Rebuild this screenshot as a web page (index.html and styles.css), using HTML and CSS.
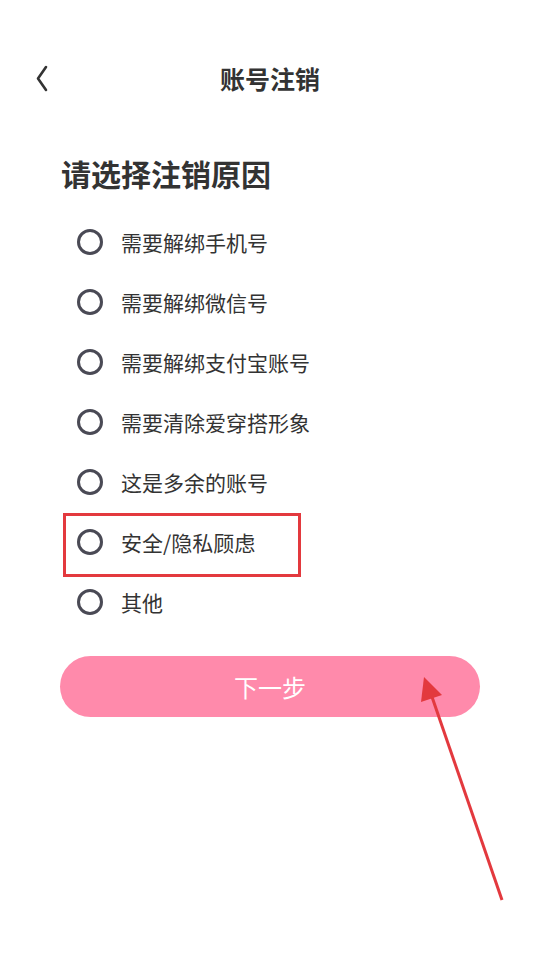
FILE: index.html
```html
<!DOCTYPE html>
<html lang="zh">
<head>
<meta charset="utf-8">
<link rel="stylesheet" href="styles.css">
</head>
<body>
<div class="page">
  <header class="header">
    <div class="back">
      <svg width="14" height="28" viewBox="0 0 14 28"><path d="M11 2 L3 13.5 L11 25" fill="none" stroke="#333" stroke-width="2.6" stroke-linecap="round" stroke-linejoin="round"/></svg>
    </div>
    <div class="title">账号注销</div>
    <div></div>
  </header>
  <h1 class="heading">请选择注销原因</h1>
  <ul class="list">
    <li class="row"><span class="radio"></span><span>需要解绑手机号</span></li>
    <li class="row"><span class="radio"></span><span>需要解绑微信号</span></li>
    <li class="row"><span class="radio"></span><span>需要解绑支付宝账号</span></li>
    <li class="row"><span class="radio"></span><span>需要清除爱穿搭形象</span></li>
    <li class="row"><span class="radio"></span><span>这是多余的账号</span></li>
    <li class="row"><span class="radio"></span><span>安全/隐私顾虑</span></li>
    <li class="row"><span class="radio"></span><span>其他</span></li>
  </ul>
  <button class="next">下一步</button>
  <div class="highlight"></div>
  <svg class="arrow" width="540" height="960" viewBox="0 0 540 960">
    <line x1="502" y1="900" x2="431" y2="694" stroke="#e3393e" stroke-width="3"/>
    <polygon points="424,677 421,702 442,695" fill="#e3393e"/>
  </svg>
</div>
</body>
</html>
```
FILE: styles.css
```css
* { box-sizing: border-box; }
html, body { margin: 0; padding: 0; background: #fff; }
body { font-family: "Noto Sans CJK SC", "Noto Sans", sans-serif; color: #333; }
.page { position: relative; width: 540px; height: 960px; overflow: hidden; }
.header {
  margin-top: 48px;
  height: 62px;
  display: grid;
  grid-template-columns: 1fr auto 1fr;
  align-items: center;
}
.back { padding-left: 35px; display: flex; align-items: center; }
.title { font-size: 25px; font-weight: 700; color: #333; line-height: 34px; margin-top: -2px; }
.heading {
  margin: 43px 0 0 0;
  padding-left: 61px;
  font-size: 30px;
  line-height: 40px;
  font-weight: 700;
  color: #333;
}
.list { list-style: none; margin: 19px 0 0 0; padding: 0 0 0 77px; }
.row {
  height: 60px;
  display: flex;
  align-items: center;
  gap: 18px;
  font-size: 21px;
  color: #333;
}
.radio {
  width: 26px; height: 26px;
  border: 3px solid #4a4a55;
  border-radius: 50%;
  flex: none;
}
.next {
  display: block;
  margin: 24px 60px 0 60px;
  width: 420px;
  height: 61px;
  border: none;
  border-radius: 31px;
  background: #ff8aab;
  color: #fff;
  font-family: inherit;
  font-size: 24px;
}
.highlight {
  position: absolute;
  left: 63px; top: 513px;
  width: 238px; height: 64px;
  border: 3px solid #e3393e;
}
.arrow { position: absolute; left: 0; top: 0; pointer-events: none; }
```
